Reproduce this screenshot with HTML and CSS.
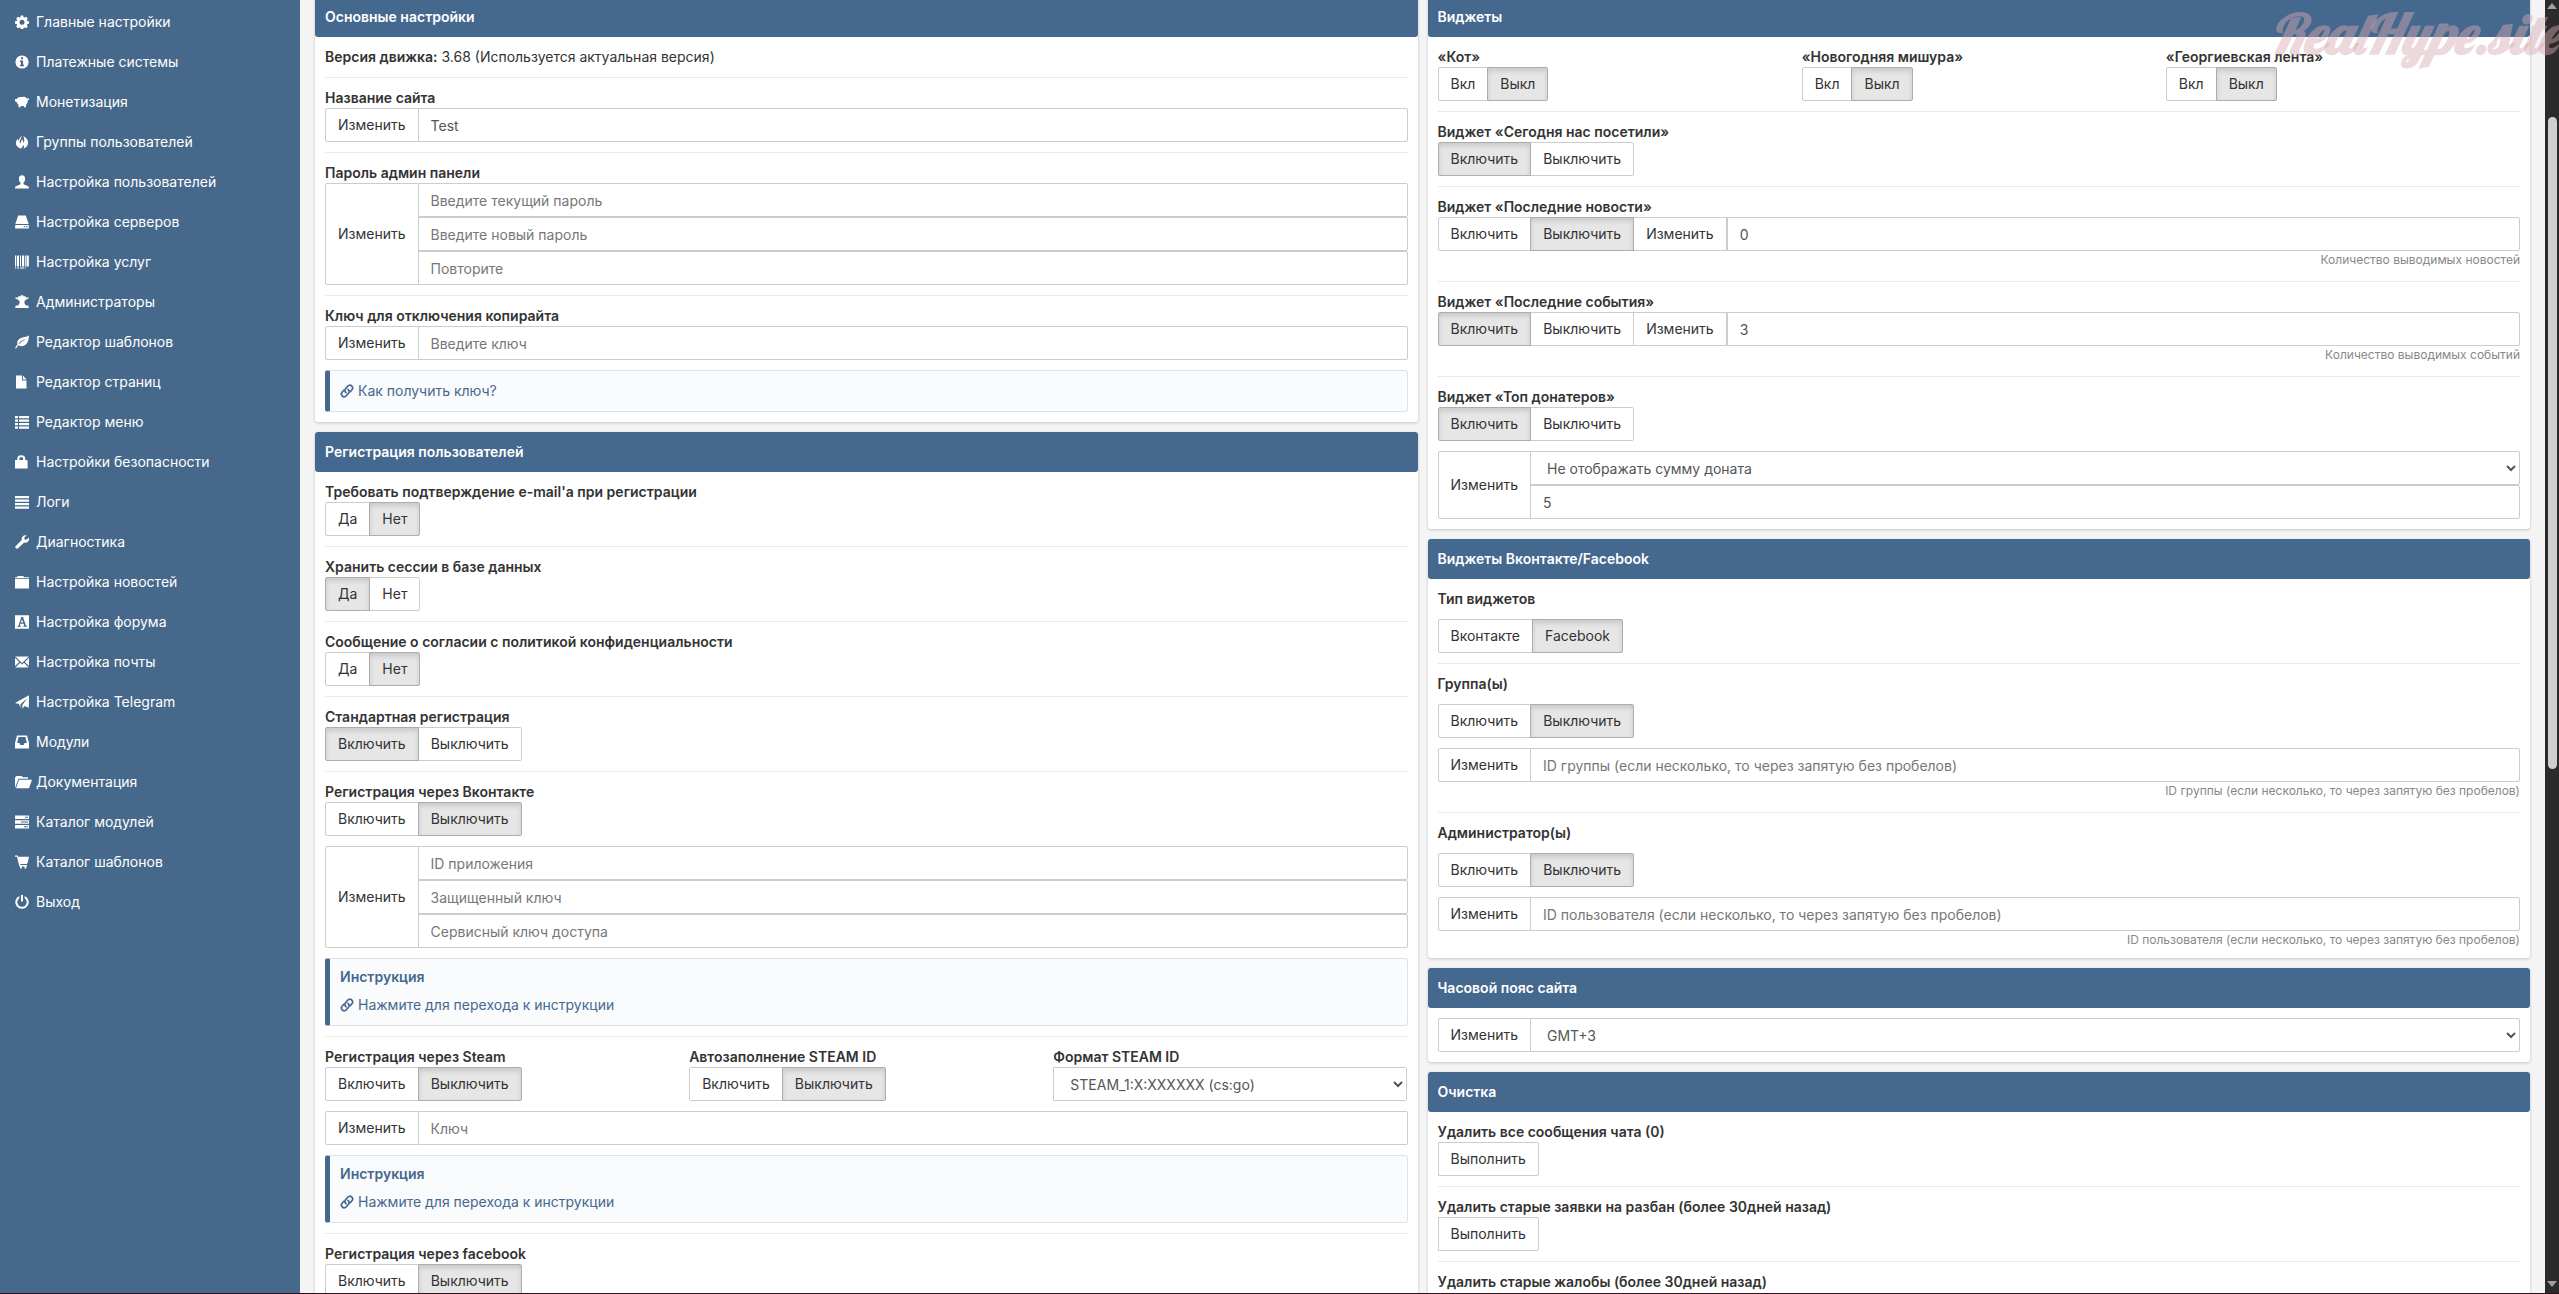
FILE: index.html
```
<!DOCTYPE html>
<html lang="ru">
<head>
    <meta charset="UTF-8">
    <meta name="viewport" content="width=device-width, initial-scale=1.0">
    <title>Главные настройки</title>
    <link rel="stylesheet" href="styles.css">
</head>
<body>

<svg class="sprite" aria-hidden="true">
    <symbol id="i-link" viewBox="0 0 14 14"><g fill="none" stroke="currentColor" stroke-width="1.7" stroke-linecap="round"><path d="M6 8.6C4.7 7.500 4.600 6 5.500 4.800L7.700 2.200C8.700 1 10.500.9 11.600 1.900s1.300 2.700.3 3.900L10.300 7.700"/><path d="M8 5.400c1.300 1.100 1.400 2.600.5 3.800L6.300 11.800c-1 1.200-2.800 1.300-3.900.3s-1.300-2.700-.3-3.900L3.700 6.300"/></g></symbol>
</svg>

<div class="page">
    <nav class="sidebar">
        <a href="#"><svg viewBox="0 0 14 14"><path fill-rule="evenodd" d="M5.800.5h2.400l.4 1.700 1 .4 1.500-.9 1.700 1.700-.9 1.500.4 1 1.700.4v2.400l-1.700.4-.4 1 .9 1.500-1.700 1.700-1.500-.9-1 .4-.4 1.700H5.800l-.4-1.700-1-.4-1.500.9-1.700-1.700.9-1.500-.4-1L0 8.700V6.300l1.700-.4.4-1-.9-1.500 1.700-1.700 1.500.9 1-.4zM7 4.800a2.500 2.500 0 1 0 0 5 2.500 2.500 0 0 0 0-5z"/></svg>Главные настройки</a>
        <a href="#"><svg viewBox="0 0 14 14"><path fill-rule="evenodd" d="M7 .4a6.600 6.600 0 1 0 0 13.200A6.600 6.600 0 0 0 7 .4zM5.900 2.300h2.200v2H5.900zM5 5.500h3.100v4.300H9v1.500H5V9.800h.9V7H5z"/></svg>Платежные системы</a>
        <a href="#"><svg viewBox="0 0 14 14"><path d="M0 4l1.700.1C2.300 3 3 2.500 4 2.200L9 1.800c1.300.1 2.300.8 3 1.900l2-.6v1.400l-1.300 1c0 2-.6 3.300-1.700 4.400v2.300H8.900v-1.100H5.700v1.100H3.500v-2.400C2.500 9 2 8.200 1.600 7L0 6.300V5z"/></svg>Монетизация</a>
        <a href="#"><svg viewBox="0 0 14 14"><path d="M6.300.4c.5 2.200-.6 3.500-1.300 4.800-.6 1.200-.4 2.500.7 3.200-.2-1.800.9-3 1.900-4.200.6 1.500.2 2.800 1 3.500.9-1.700.9-4.200-.3-6.800 3.400 1.700 5 4.300 4.800 7.200-.2 2.700-2 5-4.600 5.500 1-1.500.5-2.500-.2-3.500-.4 1.600-1.500 2.400-2 3.500C3 13 .9 10.800 1 8c0-1.500.7-3 1.500-4.200.2 1 .3 1.800.8 2.300C3.300 3.900 6 2.700 6.300.4z"/></svg>Группы пользователей</a>
        <a href="#"><svg viewBox="0 0 14 14"><path d="M7 .3c2 0 3.100 1.400 3.100 3.400 0 1.900-.7 3.300-1.600 4v1.500l4.500 2c.7.400 1 1 1 2.300H0c0-1.300.3-1.900 1-2.300l4.500-2V7.700c-.9-.7-1.600-2.100-1.600-4C3.900 1.700 5 .3 7 .3z"/></svg>Настройка пользователей</a>
        <a href="#"><svg viewBox="0 0 14 14"><path fill-rule="evenodd" d="M3.200.6h7.600l2.900 8.400H.3zM.2 10h13.600v3.500H.2zM8.700 11.300v1h1.500v-1zm2.500 0v1h1.500v-1z"/></svg>Настройка серверов</a>
        <a href="#"><svg viewBox="0 0 14 14"><path d="M0 .5h1.200v11H0zM2 .5h2v11H2zM5 .5h1v11H5zM7 .5h2v11H7zM9.800.5h1v11h-1zM11.500.5h2.300v11h-2.300zM0 12.500h1.200v1H0zM2 12.500h2v1H2zM5 12.500h4v1H5zM9.800 12.500h1v1h-1z"/></svg>Настройка услуг</a>
        <a href="#"><svg viewBox="0 0 14 14"><path d="M5.700.2h2.600v1h2.400v1.200H14c-.4 1.200-1.300 1.700-3.200 2v1H9.500v2.800l1.400 2.300h2.400v1.300h.5v1.200H.2v-1.200h.5v-1.300h2.400l1.400-2.300V5.400H3.200v-1C1.300 4.100.4 3.600 0 2.400h3.300V1.200h2.400z"/></svg>Администраторы</a>
        <a href="#"><svg viewBox="0 0 14 14"><path fill-rule="evenodd" d="M13.900.3c.1 5.300-1.800 10.700-7 10.900-1.500.1-2.600-.4-3.400-.9L1 13.500l-1-.6 2.400-3.300C1.300 4.300 6 2.600 9.600 2.100 11.500 1.900 12.800 1.300 13.900.3zM10.800 4C7.600 4.800 5.200 6.300 3.600 8.700l.5.4C6 7 8.300 5.600 10.800 4z"/></svg>Редактор шаблонов</a>
        <a href="#"><svg viewBox="0 0 14 14"><path d="M1 .5h6v5h4.500v8H1zM7.900.5l3.600 4H7.900z"/></svg>Редактор страниц</a>
        <a href="#"><svg viewBox="0 0 14 14"><path d="M0 1h3v2.300H0zM4 1h10v2.300H4zM0 4.500h3v2.300H0zM4 4.500h10v2.300H4zM0 8h3v2.300H0zM4 8h10v2.300H4zM0 11.500h3v2.300H0zM4 11.500h10v2.300H4z"/></svg>Редактор меню</a>
        <a href="#"><svg viewBox="0 0 14 14"><path fill-rule="evenodd" d="M0 5h2.300V3.500C2.300 1.500 3.800.3 6.200.3s4 1.200 4 3.200V5h1.500c.6 0 .9.400.9.900v7.600H0zM4.400 5h3.700V3.700c0-1-.7-1.500-1.900-1.500s-1.800.5-1.800 1.500z"/></svg>Настройки безопасности</a>
        <a href="#"><svg viewBox="0 0 14 14"><path d="M0 1h14v2.300H0zM0 4.500h14v2.300H0zM0 8h14v2.300H0zM0 11.500h14v2.300H0z"/></svg>Логи</a>
        <a href="#"><svg viewBox="0 0 14 14"><path d="M11.500.4L9.300 2.600l.3 1.800 1.800.3 2.300-2.300c.6 1.600.2 3.300-.9 4.300-1.100 1-2.400 1.200-3.700.8l-6 5.800c-.8.700-1.700.6-2.300 0-.7-.7-.7-1.600 0-2.300l6-5.900c-.4-1.300-.2-2.700.8-3.700C8.700.3 10-.1 11.500.4z"/></svg>Диагностика</a>
        <a href="#"><svg viewBox="0 0 14 14"><path d="M0 2.300h2l.7-1.200h5.600L9 2.300h5v1H0zM0 4h14v9.500H0z"/></svg>Настройка новостей</a>
        <a href="#"><svg viewBox="0 0 14 14"><path fill-rule="evenodd" d="M0 .2h14v13.600H0zM6.300 2L3.600 10.500l-1.200.4v.8h3.500v-.8l-1-.4.5-1.800h3.300l.6 1.800-1 .4v.8h3.800v-.8l-1.200-.4L8 2zM7 4.300l1.200 3.300H5.800z"/></svg>Настройка форума</a>
        <a href="#"><svg viewBox="0 0 14 14"><path d="M.2 1.500h13.600L7 8zM0 2.800L4.200 7 0 11zM14 2.800V11L9.800 7zM5.100 7.800L7 9.600l1.900-1.800 4.700 4.700H.4z"/></svg>Настройка почты</a>
        <a href="#"><svg viewBox="0 0 14 14"><path d="M14 .3l-.2 12.500-4.200-1.700-2.200 2.600V9.900l5-7-6.900 6.300v3.600L4 9.100 0 8z"/></svg>Настройка Telegram</a>
        <a href="#"><svg viewBox="0 0 14 14"><path fill-rule="evenodd" d="M2 .4h10L14 8v5.500H0V8zM3.600 2L2.200 8h2.200l1 2h3.200l1-2h2.200l-1.400-6z"/></svg>Модули</a>
        <a href="#"><svg class="wide" viewBox="0 0 17 14"><path d="M0 2.500L1.500 1h5L8 2.300h5v1.500H3.500L.8 11 0 12.800zM4 4.800h13l-3 8.500H1z"/></svg>Документация</a>
        <a href="#"><svg viewBox="0 0 14 14"><path fill-rule="evenodd" d="M0 .5h14V4H0zM10 1.700v1h3v-1zM0 5.200h14v3.600H0zM6 6.500v1h7v-1zM0 10h14v3.500H0zM9 11.200v1h4v-1z"/></svg>Каталог модулей</a>
        <a href="#"><svg viewBox="0 0 14 14"><path d="M0 .5h2.500l.6 1.300H14l-1.500 6.500-1 .8H5.300l.2 1H12v1.300h-.7v2h-1.800v-2H6.800v2H5v-2h-.6L2 1.800H0z"/></svg>Каталог шаблонов</a>
        <a href="#"><svg viewBox="0 0 14 14"><path d="M6 0h2v6.500H6zM4.300 1v2.300a4.700 4.700 0 1 0 5.400 0V1A6.700 6.700 0 1 1 4.300 1z"/></svg>Выход</a>
    </nav>

    <main class="content">
        <div class="column">
            <section class="card card-first">
                <h2>Основные настройки</h2>
                <div class="card-body">
                    <p class="text"><b>Версия движка:</b> 3.68 (Используется актуальная версия)</p>
                    <hr>
                    <label for="siteName">Название сайта</label>
                    <div class="input-group">
                        <button type="button">Изменить</button>
                        <div class="fields"><input type="text" id="siteName" value="Test"></div>
                    </div>
                    <hr>
                    <label for="password">Пароль админ панели</label>
                    <div class="input-group">
                        <button type="button">Изменить</button>
                        <div class="fields">
                            <input type="password" id="password" placeholder="Введите текущий пароль">
                            <input type="password" aria-label="Новый пароль" placeholder="Введите новый пароль">
                            <input type="password" aria-label="Повторите пароль" placeholder="Повторите">
                        </div>
                    </div>
                    <hr>
                    <label for="copyKey">Ключ для отключения копирайта</label>
                    <div class="input-group">
                        <button type="button">Изменить</button>
                        <div class="fields"><input type="text" id="copyKey" placeholder="Введите ключ"></div>
                    </div>
                    <div class="note">
                        <a href="#"><svg><use href="#i-link"/></svg>Как получить ключ?</a>
                    </div>
                </div>
            </section>

            <section class="card">
                <h2>Регистрация пользователей</h2>
                <div class="card-body">
                    <h3>Требовать подтверждение e-mail'а при регистрации</h3>
                    <div class="btn-group">
                        <button type="button">Да</button>
                        <button type="button" class="active">Нет</button>
                    </div>
                    <hr>
                    <h3>Хранить сессии в базе данных</h3>
                    <div class="btn-group">
                        <button type="button" class="active">Да</button>
                        <button type="button">Нет</button>
                    </div>
                    <hr>
                    <h3>Сообщение о согласии с политикой конфиденциальности</h3>
                    <div class="btn-group">
                        <button type="button">Да</button>
                        <button type="button" class="active">Нет</button>
                    </div>
                    <hr>
                    <h3>Стандартная регистрация</h3>
                    <div class="btn-group">
                        <button type="button" class="active">Включить</button>
                        <button type="button">Выключить</button>
                    </div>
                    <hr>
                    <h3>Регистрация через Вконтакте</h3>
                    <div class="btn-group">
                        <button type="button">Включить</button>
                        <button type="button" class="active">Выключить</button>
                    </div>
                    <div class="input-group spaced">
                        <button type="button">Изменить</button>
                        <div class="fields">
                            <input type="text" aria-label="ID приложения" placeholder="ID приложения">
                            <input type="text" aria-label="Защищенный ключ" placeholder="Защищенный ключ">
                            <input type="text" aria-label="Сервисный ключ доступа" placeholder="Сервисный ключ доступа">
                        </div>
                    </div>
                    <div class="note">
                        <h4>Инструкция</h4>
                        <a href="#"><svg><use href="#i-link"/></svg>Нажмите для перехода к инструкции</a>
                    </div>
                    <hr>
                    <div class="thirds">
                        <div>
                            <h3>Регистрация через Steam</h3>
                            <div class="btn-group">
                                <button type="button">Включить</button>
                                <button type="button" class="active">Выключить</button>
                            </div>
                        </div>
                        <div>
                            <h3>Автозаполнение STEAM ID</h3>
                            <div class="btn-group">
                                <button type="button">Включить</button>
                                <button type="button" class="active">Выключить</button>
                            </div>
                        </div>
                        <div>
                            <label for="steamFormat">Формат STEAM ID</label>
                            <select id="steamFormat"><option>STEAM_1:X:XXXXXX (cs:go)</option></select>
                        </div>
                    </div>
                    <div class="input-group spaced">
                        <button type="button">Изменить</button>
                        <div class="fields"><input type="text" aria-label="Ключ Steam" placeholder="Ключ"></div>
                    </div>
                    <div class="note">
                        <h4>Инструкция</h4>
                        <a href="#"><svg><use href="#i-link"/></svg>Нажмите для перехода к инструкции</a>
                    </div>
                    <hr>
                    <h3>Регистрация через facebook</h3>
                    <div class="btn-group">
                        <button type="button">Включить</button>
                        <button type="button" class="active">Выключить</button>
                    </div>
                </div>
            </section>
        </div>

        <div class="column">
            <section class="card card-first">
                <h2>Виджеты</h2>
                <div class="card-body">
                    <div class="thirds">
                        <div>
                            <h3>«Кот»</h3>
                            <div class="btn-group">
                                <button type="button">Вкл</button>
                                <button type="button" class="active">Выкл</button>
                            </div>
                        </div>
                        <div>
                            <h3>«Новогодняя мишура»</h3>
                            <div class="btn-group">
                                <button type="button">Вкл</button>
                                <button type="button" class="active">Выкл</button>
                            </div>
                        </div>
                        <div>
                            <h3>«Георгиевская лента»</h3>
                            <div class="btn-group">
                                <button type="button">Вкл</button>
                                <button type="button" class="active">Выкл</button>
                            </div>
                        </div>
                    </div>
                    <hr>
                    <h3>Виджет «Сегодня нас посетили»</h3>
                    <div class="btn-group">
                        <button type="button" class="active">Включить</button>
                        <button type="button">Выключить</button>
                    </div>
                    <hr>
                    <label for="newsCount">Виджет «Последние новости»</label>
                    <div class="input-group split">
                        <button type="button">Включить</button>
                        <button type="button" class="active">Выключить</button>
                        <button type="button">Изменить</button>
                        <div class="fields"><input type="text" id="newsCount" value="0"></div>
                    </div>
                    <small>Количество выводимых новостей</small>
                    <hr>
                    <label for="eventsCount">Виджет «Последние события»</label>
                    <div class="input-group split">
                        <button type="button" class="active">Включить</button>
                        <button type="button">Выключить</button>
                        <button type="button">Изменить</button>
                        <div class="fields"><input type="text" id="eventsCount" value="3"></div>
                    </div>
                    <small>Количество выводимых событий</small>
                    <hr>
                    <h3>Виджет «Топ донатеров»</h3>
                    <div class="btn-group">
                        <button type="button" class="active">Включить</button>
                        <button type="button">Выключить</button>
                    </div>
                    <div class="input-group spaced">
                        <button type="button">Изменить</button>
                        <div class="fields">
                            <select aria-label="Сумма доната"><option>Не отображать сумму доната</option></select>
                            <input type="text" aria-label="Количество донатеров" value="5">
                        </div>
                    </div>
                </div>
            </section>

            <section class="card">
                <h2>Виджеты Вконтакте/Facebook</h2>
                <div class="card-body">
                    <h3>Тип виджетов</h3>
                    <div class="btn-group spaced">
                        <button type="button">Вконтакте</button>
                        <button type="button" class="active">Facebook</button>
                    </div>
                    <hr>
                    <h3>Группа(ы)</h3>
                    <div class="btn-group spaced">
                        <button type="button">Включить</button>
                        <button type="button" class="active">Выключить</button>
                    </div>
                    <div class="input-group spaced">
                        <button type="button">Изменить</button>
                        <div class="fields"><input type="text" aria-label="ID группы" placeholder="ID группы (если несколько, то через запятую без пробелов)"></div>
                    </div>
                    <small>ID группы (если несколько, то через запятую без пробелов)</small>
                    <hr>
                    <h3>Администратор(ы)</h3>
                    <div class="btn-group spaced">
                        <button type="button">Включить</button>
                        <button type="button" class="active">Выключить</button>
                    </div>
                    <div class="input-group spaced">
                        <button type="button">Изменить</button>
                        <div class="fields"><input type="text" aria-label="ID пользователя" placeholder="ID пользователя (если несколько, то через запятую без пробелов)"></div>
                    </div>
                    <small>ID пользователя (если несколько, то через запятую без пробелов)</small>
                </div>
            </section>

            <section class="card">
                <h2>Часовой пояс сайта</h2>
                <div class="card-body">
                    <div class="input-group">
                        <button type="button">Изменить</button>
                        <div class="fields"><select aria-label="Часовой пояс"><option>GMT+3</option></select></div>
                    </div>
                </div>
            </section>

            <section class="card">
                <h2>Очистка</h2>
                <div class="card-body">
                    <h3>Удалить все сообщения чата (0)</h3>
                    <div class="btn-group"><button type="button">Выполнить</button></div>
                    <hr>
                    <h3>Удалить старые заявки на разбан (более 30дней назад)</h3>
                    <div class="btn-group"><button type="button">Выполнить</button></div>
                    <hr>
                    <h3>Удалить старые жалобы (более 30дней назад)</h3>
                </div>
            </section>
        </div>
    </main>

    <div class="scrollbar" aria-hidden="true">
        <svg viewBox="0 0 10 6"><path d="M5 0l5 6H0z"/></svg>
        <div class="track"><div class="thumb"></div></div>
        <svg viewBox="0 0 10 6"><path d="M0 0h10L5 6z"/></svg>
    </div>
</div>

<div class="watermark">RealHype.site</div>

</body>
</html>
```

FILE: styles.css
```
* {
    box-sizing: border-box;
}

body {
    margin: 0;
    font-family: Inter, "Open Sans", sans-serif;
    font-size: 14px;
    line-height: 20px;
    color: #333;
    background-color: #f4f4f4;
}

.sprite {
    display: none;
}

.page {
    display: flex;
    height: 100vh;
    overflow: hidden;
    border-bottom: 1px solid #35101c;
}

/* sidebar */
.sidebar {
    flex: 0 0 300px;
    padding-top: 2px;
    background-color: #46698b;
}

.sidebar a {
    display: flex;
    align-items: center;
    gap: 7px;
    height: 40px;
    padding-left: 15px;
    color: #fff;
    text-decoration: none;
}

.sidebar svg {
    width: 14px;
    height: 14px;
    fill: #fff;
}

.sidebar svg.wide {
    width: 17px;
    margin-right: -3px;
}

/* content */
.content {
    flex: 1;
    display: grid;
    grid-template-columns: 1fr 1fr;
    gap: 10px;
    padding: 0 15px;
}

.column {
    min-width: 0;
}

.card {
    margin-bottom: 10px;
    background-color: #fff;
    border-radius: 3px;
    box-shadow: 0 1px 3px rgba(0, 0, 0, 0.2);
}

.card h2 {
    margin: 0;
    padding: 10px;
    font-size: 14px;
    font-weight: 600;
    color: #fff;
    background-color: #45688e;
    border-radius: 3px;
}

/* scrolled a little under the top edge */
.card-first {
    margin-top: -3px;
}

.card-body {
    padding: 10px;
}

h3, label {
    display: block;
    margin: 0;
    font-size: 14px;
    font-weight: 600;
}

.text {
    margin: 0;
}

.text b {
    font-weight: 600;
}

hr {
    margin: 10px 0;
    border: 0;
    border-top: 1px solid #eaeaea;
}

.thirds {
    display: grid;
    grid-template-columns: 1fr 1fr 1fr;
    gap: 10px;
}

.spaced {
    margin-top: 10px;
}

/* controls */
button {
    height: 34px;
    padding: 0 12px;
    font: inherit;
    color: #333;
    background-color: #fff;
    border: 1px solid #ccc;
    cursor: pointer;
}

button.active {
    position: relative;
    background-color: #e6e6e6;
    border-color: #adadad;
    box-shadow: inset 0 3px 5px rgba(0, 0, 0, 0.125);
}

.btn-group {
    display: flex;
}

button + button {
    margin-left: -1px;
}

.btn-group button:first-child {
    border-radius: 2px 0 0 2px;
}

.btn-group button:last-child {
    border-radius: 0 2px 2px 0;
}

.input-group {
    display: flex;
}

.input-group button {
    height: auto;
}

.input-group button:first-child {
    border-radius: 2px 0 0 2px;
}

.fields {
    flex: 1;
    margin-left: -1px;
}

.split .fields {
    margin-left: 0;
}

input, select {
    display: block;
    width: 100%;
    height: 34px;
    padding: 6px 12px;
    font: inherit;
    color: #555;
    background-color: #fff;
    border: 1px solid #ccc;
    border-radius: 0 2px 2px 0;
    outline: none;
}

input::placeholder {
    color: #777;
}

small {
    display: block;
    margin-bottom: 13px;
    font-size: 12px;
    line-height: 17px;
    color: #888;
    text-align: right;
}

small:last-child {
    margin-bottom: 0;
}

.note {
    margin-top: 10px;
    padding: 10px;
    background-color: #f9fbfd;
    border: 1px solid #dce4ea;
    border-left: 5px solid #45688e;
    border-radius: 3px;
}

.note h4 {
    margin: 0 0 10px;
    font-size: 14px;
    font-weight: 600;
    line-height: 16px;
    color: #45688e;
}

.note a {
    display: flex;
    align-items: center;
    gap: 4px;
    color: #45688e;
    text-decoration: none;
}

.note svg {
    width: 14px;
    height: 14px;
}

/* scrollbar */
.scrollbar {
    flex: 0 0 14px;
    display: flex;
    flex-direction: column;
    align-items: center;
    padding: 3px 0 6px;
    background-color: #2b2b2b;
}

.scrollbar svg {
    width: 10px;
    height: 6px;
    fill: #a0a0a0;
}

.track {
    flex: 1;
    width: 9px;
    padding-top: 108px;
}

.thumb {
    height: 56%;
    background-color: #cfcfcf;
    border-radius: 5px;
}

.watermark {
    position: fixed;
    top: 0;
    right: 0;
    font-family: Lobster, "Liberation Serif", serif;
    font-size: 55px;
    font-style: italic;
    font-weight: 700;
    line-height: 68px;
    color: rgba(214, 170, 178, 0.45);
    pointer-events: none;
}
```
